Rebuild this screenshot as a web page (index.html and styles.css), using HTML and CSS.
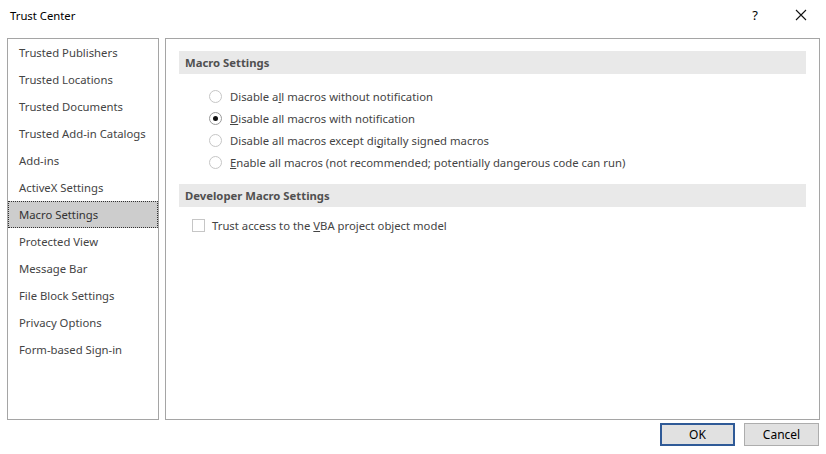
FILE: index.html
```html
<!DOCTYPE html>
<html>
    <head>
        <meta charset="utf-8">
        <title>Trust Center</title>
        <link rel="stylesheet" href="styles.css">
    </head>
    <body>
        <div class="dialog">
            <div class="titlebar">
                <span class="title">Trust Center</span>
                <span class="tb-btn help">?</span>
                <span class="tb-btn close">
                    <svg width="12" height="12" viewBox="0 0 12 12"><path d="M1 1 L11 11 M11 1 L1 11" stroke="#111" stroke-width="1.1" fill="none"/></svg>
                </span>
            </div>

            <div class="main">
                <ul class="nav">
                    <li>Trusted Publishers</li>
                    <li>Trusted Locations</li>
                    <li>Trusted Documents</li>
                    <li>Trusted Add-in Catalogs</li>
                    <li>Add-ins</li>
                    <li>ActiveX Settings</li>
                    <li class="active">Macro Settings</li>
                    <li>Protected View</li>
                    <li>Message Bar</li>
                    <li>File Block Settings</li>
                    <li>Privacy Options</li>
                    <li>Form-based Sign-in</li>
                </ul>

                <div class="panel">
                    <div class="section-head">Macro Settings</div>
                    <div class="options">
                        <div class="opt"><span class="radio"></span><span>Disable a<u>l</u>l macros without notification</span></div>
                        <div class="opt"><span class="radio on"></span><span><u>D</u>isable all macros with notification</span></div>
                        <div class="opt"><span class="radio"></span><span>Disable all macros except di<u>g</u>itally signed macros</span></div>
                        <div class="opt"><span class="radio"></span><span><u>E</u>nable all macros (not recommended; potentially dangerous code can run)</span></div>
                    </div>

                    <div class="section-head">Developer Macro Settings</div>
                    <div class="check-row"><span class="check"></span><span>Trust access to the <u>V</u>BA project object model</span></div>
                </div>
            </div>

            <div class="footer">
                <button class="btn default">OK</button>
                <button class="btn">Cancel</button>
            </div>
        </div>
    </body>
</html>
```

FILE: styles.css
```css
* {
    box-sizing: border-box;
}
body {
    margin: 0;
    background: #fff;
    font-family: "Noto Sans", "Open Sans", sans-serif;
    font-size: 11.3px;
    color: #444;
}
.dialog {
    width: 826px;
    height: 454px;
    display: flex;
    flex-direction: column;
    background: #fff;
}
.titlebar {
    height: 30px;
    display: flex;
    align-items: center;
    padding-left: 10px;
    color: #000;
}
.title {
    flex: 1;
}
.tb-btn {
    display: flex;
    justify-content: center;
    align-items: center;
    width: 46px;
    height: 30px;
}
.help {
    font-size: 13px;
}
.close {
    margin-right: 2px;
}
.main {
    display: flex;
    gap: 6px;
    padding: 8px 6px 0 7px;
    height: 390px;
}
.nav {
    list-style: none;
    margin: 0;
    padding: 0;
    width: 152px;
    height: 382px;
    border: 1px solid #a5a5a5;
}
.nav li {
    height: 27px;
    line-height: 27px;
    padding-left: 11px;
    white-space: nowrap;
}
.nav li.active {
    background: #cdcdcd;
    border: 1px dotted #333;
    line-height: 25px;
    padding-left: 10px;
    color: #333;
}
.panel {
    flex: 1;
    height: 382px;
    border: 1px solid #a5a5a5;
    padding: 12px 13px 0 13px;
}
.section-head {
    height: 23px;
    line-height: 23px;
    background: #e9e9e9;
    padding-left: 6px;
    font-weight: bold;
    color: #505050;
}
.options {
    padding: 11px 0 11px 30px;
}
.opt {
    height: 22px;
    display: flex;
    align-items: center;
}
.radio {
    width: 13px;
    height: 13px;
    border: 1px solid #c6c6c6;
    border-radius: 50%;
    margin-right: 8px;
    display: flex;
    justify-content: center;
    align-items: center;
}
.radio.on {
    border-color: #9a9a9a;
}
.radio.on::after {
    content: "";
    width: 5px;
    height: 5px;
    border-radius: 50%;
    background: #111;
}
.check-row {
    display: flex;
    align-items: center;
    height: 22px;
    margin-top: 7px;
    padding-left: 13px;
}
.check {
    width: 13px;
    height: 13px;
    border: 1px solid #c6c6c6;
    margin-right: 7px;
}
.footer {
    display: flex;
    justify-content: flex-end;
    gap: 9px;
    padding: 3px 7px 0 0;
}
.btn {
    width: 75px;
    height: 23px;
    font-family: "Noto Sans", "Open Sans", sans-serif;
    font-size: 12px;
    color: #000;
    background: #e1e1e1;
    border: 1px solid #adadad;
    padding: 0;
}
.btn.default {
    border: 2px solid #2f5a97;
}
```
